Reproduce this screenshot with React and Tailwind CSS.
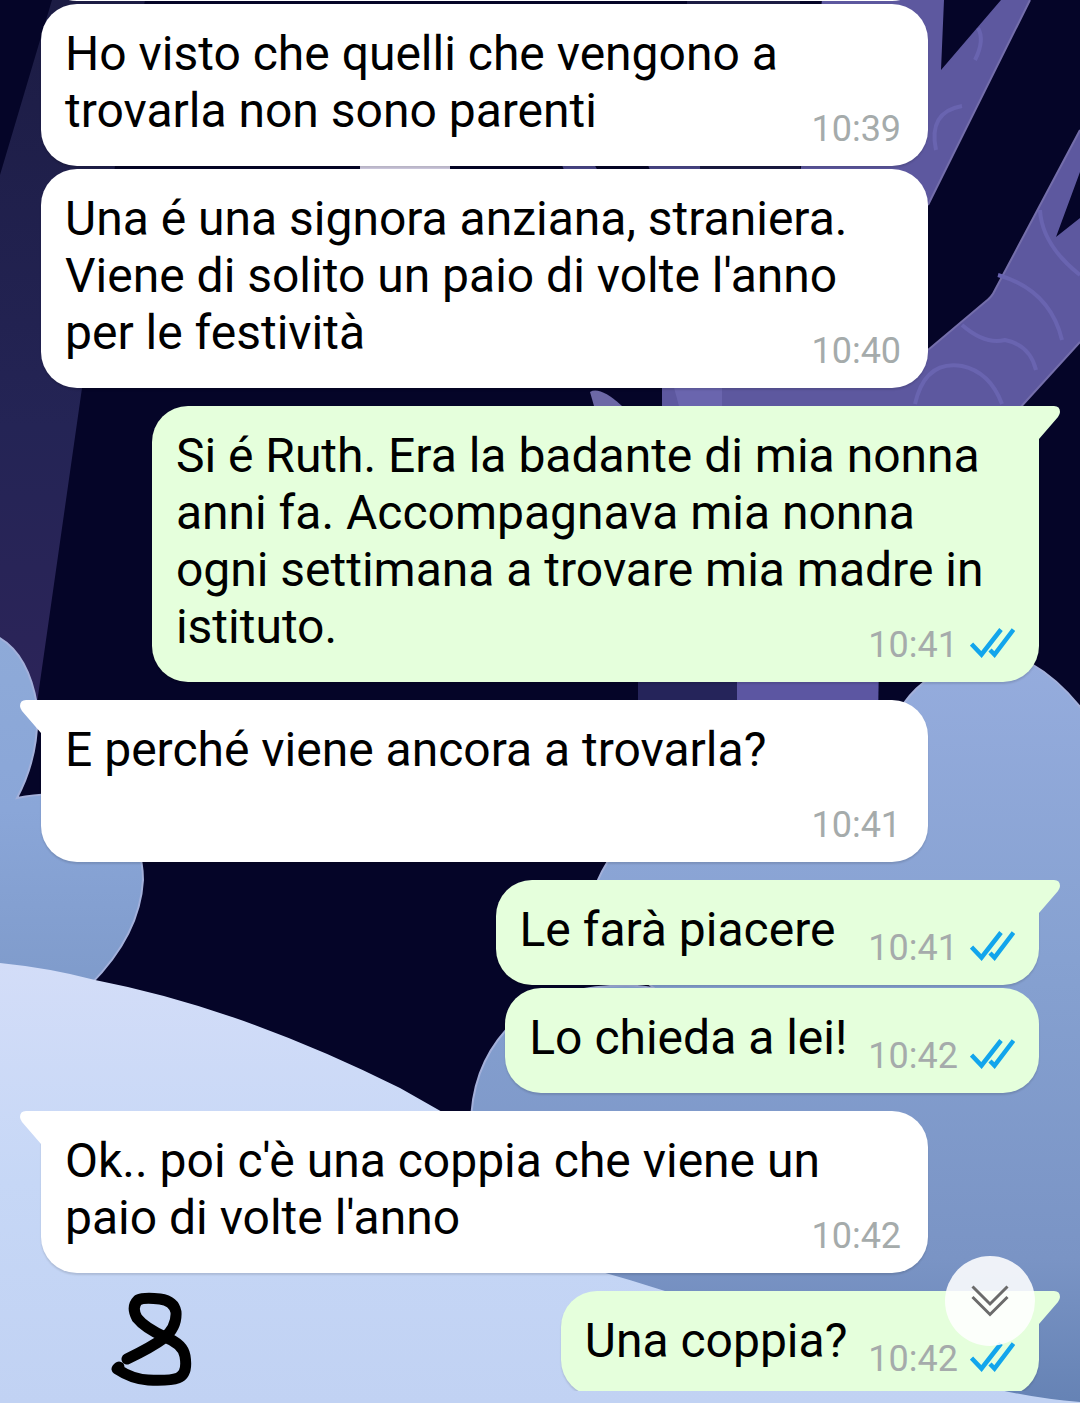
import React from 'react';

const messages = [
  { id: 1, from: 'them', text: 'Ho visto che quelli che vengono a trovarla non sono parenti', time: '10:39', layout: 'overlap', gap: 'mt-[3px]' },
  { id: 2, from: 'them', text: "Una é una signora anziana, straniera. Viene di solito un paio di volte l'anno per le festività", time: '10:40', layout: 'overlap', gap: 'mt-[3px]' },
  { id: 3, from: 'me', tail: true, text: 'Si é Ruth. Era la badante di mia nonna anni fa. Accompagnava mia nonna ogni settimana a trovare mia madre in istituto.', time: '10:41', layout: 'overlap', gap: 'mt-[18px]' },
  { id: 4, from: 'them', tail: true, text: 'E perché viene ancora a trovarla?', time: '10:41', layout: 'stacked', gap: 'mt-[18px]' },
  { id: 5, from: 'me', tail: true, text: 'Le farà piacere ', time: '10:41', layout: 'inline', gap: 'mt-[18px]' },
  { id: 6, from: 'me', text: 'Lo chieda a lei!', time: '10:42', layout: 'inline', gap: 'mt-[3px]' },
  { id: 7, from: 'them', tail: true, text: "Ok.. poi c'è una coppia che viene un paio di volte l'anno", time: '10:42', layout: 'overlap', gap: 'mt-[18px]' },
  { id: 8, from: 'me', tail: true, text: 'Una coppia?', time: '10:42', layout: 'inline', gap: 'mt-[18px]' },
];

// Where the time sits: beside the last line, on a row below, or next to the text
const layouts = {
  overlap: {
    bubble: 'grid w-8/9',
    text: 'col-start-1 row-start-1 pb-[27px]',
    meta: 'col-start-1 row-start-1',
  },
  stacked: {
    bubble: 'grid w-8/9',
    text: '',
    meta: 'h-[84px]',
  },
  inline: {
    bubble: 'flex max-w-8/9',
    text: 'pr-[21px] pb-[27px]',
    meta: '',
  },
};

const Wallpaper = () => (
  <svg
    className="absolute inset-0 h-full w-full"
    viewBox="0 0 1080 1403"
    preserveAspectRatio="xMidYMid slice"
    aria-hidden="true"
  >
    <defs>
      <linearGradient id="bush" x1="0" y1="0" x2="0" y2="1">
        <stop offset="0" stopColor="#95acdd" />
        <stop offset="0.4" stopColor="#86a1d1" />
        <stop offset="0.8" stopColor="#7a94c5" />
        <stop offset="1" stopColor="#6582b4" />
      </linearGradient>
      <linearGradient id="leftBush" x1="0" y1="0" x2="0" y2="1">
        <stop offset="0" stopColor="#8eaad8" />
        <stop offset="0.5" stopColor="#8aa6d8" />
        <stop offset="1" stopColor="#7f9bcb" />
      </linearGradient>
      <linearGradient id="snow" x1="0" y1="0" x2="0" y2="1">
        <stop offset="0" stopColor="#d3ddf8" />
        <stop offset="0.5" stopColor="#c6d7f6" />
        <stop offset="1" stopColor="#c1d2f3" />
      </linearGradient>
      <linearGradient id="trunk" x1="0" y1="0" x2="0" y2="1">
        <stop offset="0" stopColor="#1c1c44" />
        <stop offset="0.6" stopColor="#242455" />
        <stop offset="1" stopColor="#2c2459" />
      </linearGradient>
    </defs>
    <rect width="1080" height="1403" fill="#050528" />

    {/* trees */}
    <path d="M52 0H145L115 166L82 388L36 710L0 700V175Z" fill="url(#trunk)" />
    <path d="M360 150H450V180H360Z" fill="#d0cbe0" />
    <path d="M687 0H800V10H687ZM700 160H800V175H700Z" fill="#1c1c44" />
    <path d="M560 160H592L600 175H566ZM646 160H700V175H652Z" fill="#4a4789" />
    <path d="M638 600H738V720H638Z" fill="#25245a" />
    <path d="M737 600H880L878 720H737Z" fill="#5c56a2" />
    <path d="M590 392Q600 386 622 406H594Z" fill="#6c68a6" />
    <path
      d="M822 0H944L941 70L1001 0H1030L928 205L800 350H928L985 302Q992 297 995 290L1080 130V172L1056 237L1080 218V342L1018 410H662V380L800 175Z"
      fill="#5d589f"
    />
    <path d="M1030 0L928 205M928 350L985 302Q992 297 995 290L1080 130M1080 342L1018 410" fill="none" stroke="#746eab" strokeWidth="2" />
    <path d="M672 380H722V410H680Z" fill="#6a65ae" />
    <g fill="none" stroke="#6964b0" strokeWidth="4">
      <path d="M936 150Q928 112 962 106" />
      <path d="M998 275Q1050 290 1062 340" />
      <path d="M1040 210Q1042 245 1080 275" />
      <path d="M962 325Q985 345 1005 340Q1030 345 1036 370" />
      <path d="M915 404Q925 360 962 366Q990 372 1002 404" />
      <path d="M975 60Q985 40 978 28" />
    </g>

    {/* bushes */}
    <path
      d="M-4 636Q28 652 37 705Q40 755 17 798Q80 785 120 820Q143 845 143 880Q140 935 90 985H-4Z"
      fill="url(#leftBush)"
      stroke="#a3b0da"
      strokeWidth="2"
    />
    <path
      d="M471 1130Q470 1070 506 1030Q540 990 610 986Q640 984 655 989Q590 940 598 880Q640 780 890 730Q905 690 940 672Q985 655 1030 663Q1060 680 1084 712V1407H600Z"
      fill="url(#bush)"
      stroke="#a3b0da"
      strokeWidth="2"
    />

    {/* snow */}
    <path
      d="M0 963Q50 968 95 980Q240 1008 400 1088L444 1113Q500 1200 540 1256Q600 1270 665 1291Q850 1350 1000 1390Q1040 1399 1080 1402V1403H0Z"
      fill="url(#snow)"
    />
  </svg>
);

const Tail = ({ mine }) => (
  <svg
    className={`absolute top-0 h-[34px] w-[22px] ${mine ? 'left-full -ml-px text-[#e5ffdc]' : 'right-full -mr-px -scale-x-100 text-white'}`}
    viewBox="0 0 22 34"
    fill="currentColor"
    aria-hidden="true"
  >
    <path d="M0 0H16Q22 0 22 6Q22 8 20 11L1 33V34H0Z" />
  </svg>
);

const ReadTicks = () => (
  <svg
    className="mb-[8px] h-[30px] w-[45px] text-[#12a5ec]"
    viewBox="0 0 45 30"
    fill="none"
    stroke="currentColor"
    strokeWidth="4.500"
    role="img"
    aria-label="Letto"
  >
    <path d="M1.500 16L11.500 26.500L31 1.500" />
    <path d="M20 22L24.500 26.500L43.500 1.500" />
  </svg>
);

const Message = ({ message }) => {
  const mine = message.from === 'me';
  const layout = layouts[message.layout];
  const corner = message.tail ? (mine ? 'rounded-tr-none' : 'rounded-tl-none') : '';

  return (
    <li className={`flex shrink-0 ${mine ? 'justify-end' : 'justify-start'} ${message.gap}`}>
      <div
        className={`relative rounded-[36px] shadow-[0_2px_2px_rgba(0,0,0,0.12)] ${mine ? 'bg-[#e5ffdc]' : 'bg-white'} ${corner} ${layout.bubble}`}
      >
        {message.tail && <Tail mine={mine} />}
        <p className={`px-[24px] pt-[21px] text-[48px] leading-[57px] whitespace-pre-wrap text-black ${layout.text}`}>
          {message.text}
        </p>
        <div
          className={`flex items-end gap-[12px] self-end justify-self-end pb-[16px] ${mine ? 'pr-[24px]' : 'pr-[27px]'} ${layout.meta}`}
        >
          <time className="text-[36px] leading-[42px] text-[#a5abab]">{message.time}</time>
          {mine && <ReadTicks />}
        </div>
      </div>
    </li>
  );
};

const Doodle = () => (
  <svg
    className="absolute bottom-[15px] left-[110px] h-[98px] w-[84px]"
    viewBox="0 0 84 98"
    fill="none"
    stroke="#000"
    strokeWidth="11"
    strokeLinecap="round"
    strokeLinejoin="round"
    role="img"
    aria-label="8"
  >
    <path d="M17 69Q42 57 54 48Q67 37 66 22Q64 11 50 9Q34 7 28 10Q21 17 27 28Q35 38 55 47Q73 54 75 66Q78 84 68 88Q60 91 38 90Q22 89 7 79L9 77" />
  </svg>
);

export default function App() {
  return (
    <main className="relative flex h-screen flex-col overflow-hidden bg-[#050528] pb-[12px] font-['Roboto',sans-serif]">
      <Wallpaper />
      <ul className="relative flex min-h-0 flex-1 flex-col overflow-hidden px-[41px]">
        {/* bubble scrolled off the top */}
        <li className="-mt-[79px] h-[80px] w-8/9 shrink-0 rounded-[36px] bg-white" />
        {messages.map((message) => (
          <Message key={message.id} message={message} />
        ))}
      </ul>
      <Doodle />
      <button
        type="button"
        aria-label="Vai in fondo"
        className="absolute right-[45px] bottom-[57px] flex size-[90px] items-center justify-center rounded-full bg-white/88"
      >
        <svg className="h-[32px] w-[38px]" viewBox="0 0 38 32" fill="none" stroke="#6b6b6b" strokeWidth="3" aria-hidden="true">
          <path d="M1.500 1.500L19 19L36.500 1.500" />
          <path d="M1.500 12L19 29.500L36.500 12" />
        </svg>
      </button>
    </main>
  );
}
